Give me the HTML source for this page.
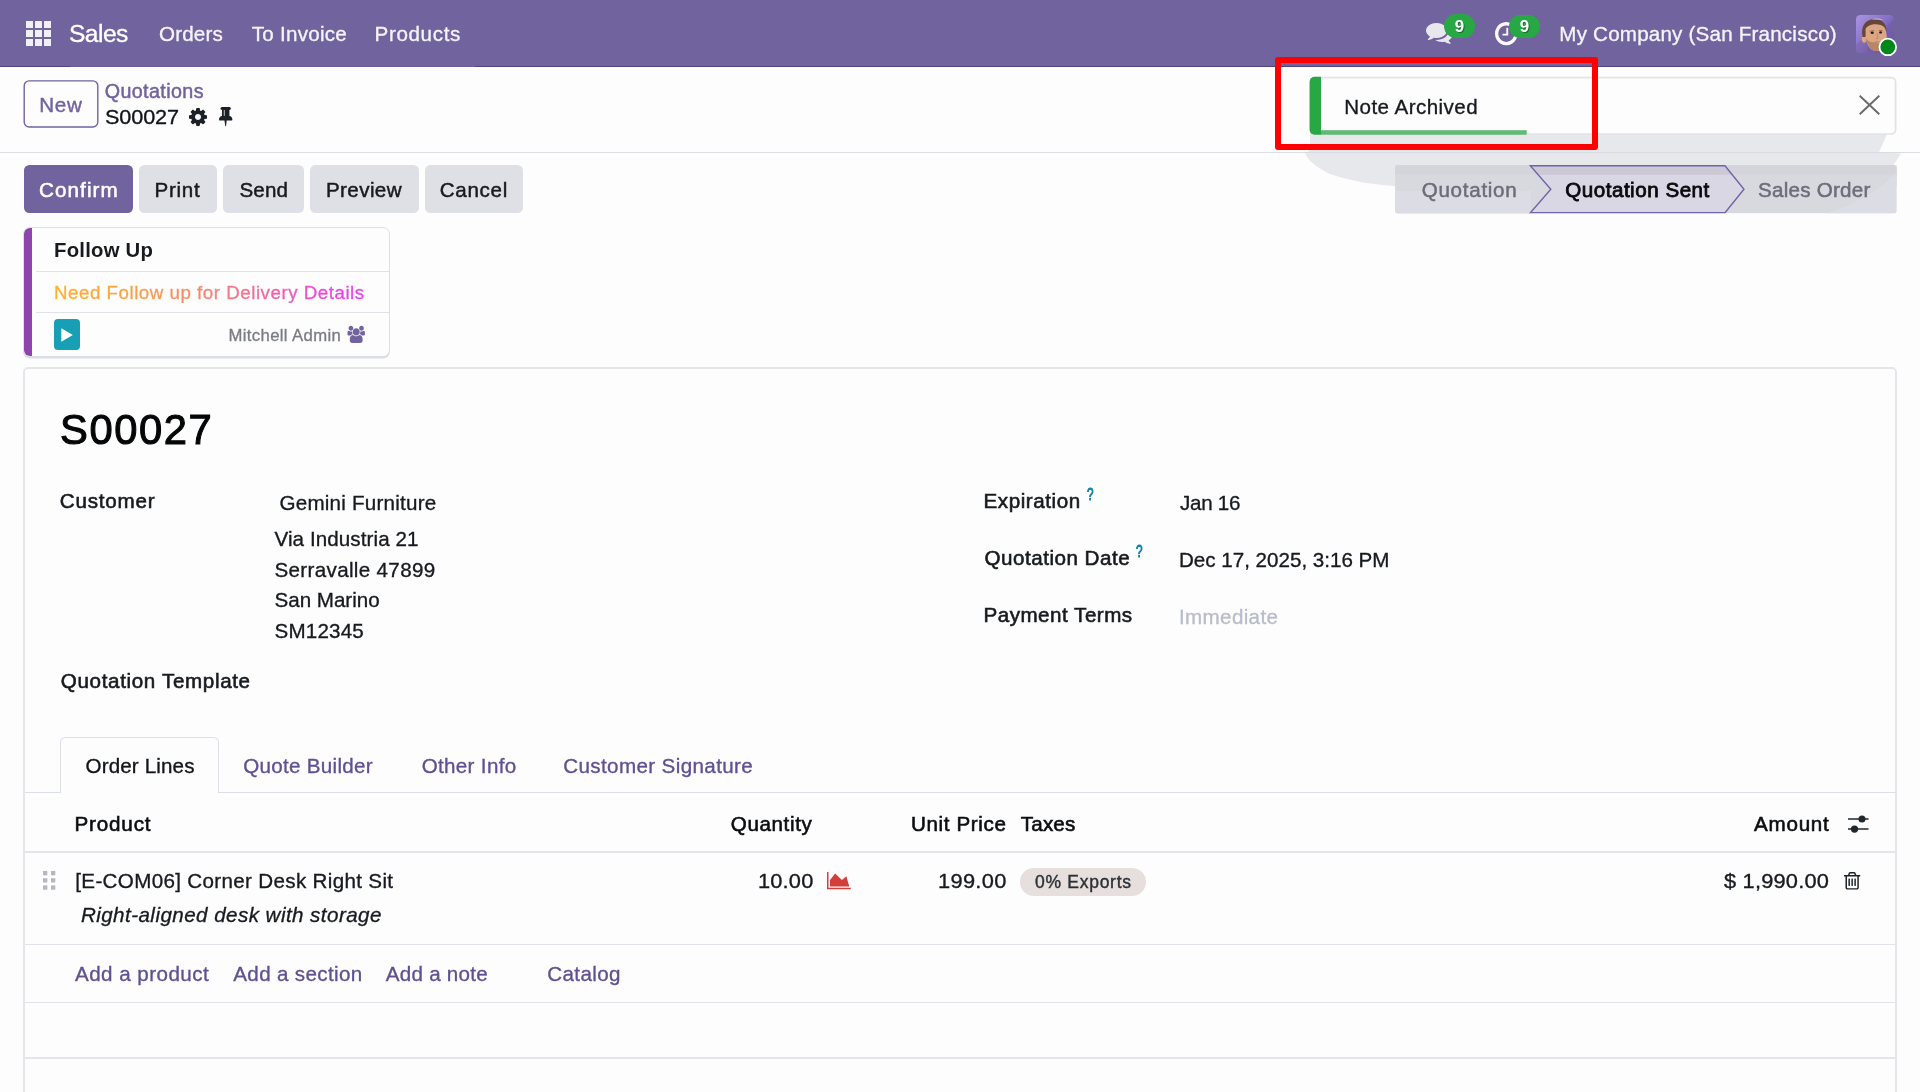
<!DOCTYPE html>
<html lang="en">
<head>
<meta charset="utf-8">
<title>S00027 - Quotations</title>
<style>
*{box-sizing:border-box;margin:0;padding:0}
html,body{width:1920px;height:1092px;overflow:hidden;background:#fdfdfd}
body{position:relative;font-family:"Liberation Sans",sans-serif}
.a{position:absolute}
.t{position:absolute;white-space:pre;line-height:1;font-family:"Liberation Sans",sans-serif}
.grad{background:linear-gradient(90deg,#ffb12c 0%,#fca047 25%,#f7886a 45%,#f57a86 56%,#f0689f 68%,#ec54c8 80%,#e945e6 90%,#e840ee 100%);-webkit-background-clip:text;background-clip:text;color:transparent !important;-webkit-text-fill-color:transparent;-webkit-text-stroke:0.35px transparent}
svg{position:absolute;overflow:visible}
.nav{left:0;top:0;width:1920px;height:67px;background:#71639e}
.cp{left:0;top:67px;width:1920px;height:86px;background:#fdfdfd;border-bottom:1.4px solid #dcdfe4}
.btn{top:165.3px;height:47.8px;border-radius:5.5px;background:#dee0e5}
.hl{height:1.4px;background:#dfe2e8}
</style>
</head>
<body>
<div id="root" style="position:absolute;left:0;top:0;width:1920px;height:1092px;will-change:transform">
<!-- ===== navbar ===== -->
<div class="a nav"></div>
<div class="a" style="left:0;top:66px;width:1920px;height:1px;background:#514280"></div>
<div class="a" style="left:70px;top:66px;width:405px;height:1px;background:#6a5b9a"></div>
<!-- apps grid -->
<svg style="left:26px;top:21px" width="25" height="25" viewBox="0 0 25 25">
 <g fill="#f1f0f6">
  <rect x="0" y="0" width="7" height="7"/><rect x="9" y="0" width="7" height="7"/><rect x="18" y="0" width="7" height="7"/>
  <rect x="0" y="9" width="7" height="7"/><rect x="9" y="9" width="7" height="7"/><rect x="18" y="9" width="7" height="7"/>
  <rect x="0" y="18" width="7" height="7"/><rect x="9" y="18" width="7" height="7"/><rect x="18" y="18" width="7" height="7"/>
 </g>
</svg>
<!-- comments icon -->
<svg style="left:1425.8px;top:21.4px" width="26.6" height="22.8" viewBox="0 128 1792 1536" preserveAspectRatio="none">
 <path fill="#e8e7ee" d="M1408 768q0 139-94 257t-256.500 186.500-353.500 68.500q-86 0-176-16-124 88-278 128-36 9-86 16h-3q-11 0-20.500-8t-11.500-21q-1-3-1-6.500t.5-6.500 2-6l2.500-5 3.500-5.500 4-5 4.500-5 4-4.500q5-6 23-25t26-29.500 22.500-29 25-38.500 20.500-44q-124-72-195-177t-71-224q0-139 94-257t256.500-186.500 353.500-68.500 353.500 68.500 256.500 186.500 94 257zm384 256q0 120-71 224.500t-195 176.500q10 24 20.500 44t25 38.500 22.500 29 26 29.500 23 25q1 1 4 4.500t4.500 5 4 5 3.500 5.500l2.500 5 2 6 .5 6.500-1 6.500q-3 14-13 22t-22 7q-50-7-86-16-154-40-278-128-90 16-176 16-271 0-472-132 58 4 88 4 161 0 309-45t264-129q125-92 192-212t67-254q0-77-23-152 129 71 204 178t75 230z"/>
</svg>
<div class="a" style="left:1443.8px;top:13.8px;width:31.4px;height:24.1px;border-radius:12px;background:#28a745"></div>
<!-- clock icon -->
<svg style="left:1494.9px;top:21.5px" width="22.6" height="23.3" viewBox="128 128 1536 1536" preserveAspectRatio="none">
 <path fill="#fbfbfd" d="M1024 544v448q0 14-9 23t-23 9h-320q-14 0-23-9t-9-23v-64q0-14 9-23t23-9h224v-352q0-14 9-23t23-9h64q14 0 23 9t9 23zm416 352q0-148-73-273t-198-198-273-73-273 73-198 198-73 273 73 273 198 198 273 73 273-73 198-198 73-273zm224 0q0 209-103 385.500t-279.500 279.500-385.500 103-385.500-103-279.500-279.500-103-385.500 103-385.500 279.500-279.500 385.500-103 385.500 103 279.500 279.500 103 385.500z"/>
</svg>
<div class="a" style="left:1508.7px;top:14.5px;width:31.4px;height:23.8px;border-radius:12px;background:#28a745"></div>
<!-- avatar -->
<svg style="left:1856px;top:14.5px" width="38" height="38.5" viewBox="0 0 38 38.5">
 <defs>
  <linearGradient id="avg" x1="0" y1="0" x2="1" y2="1">
   <stop offset="0" stop-color="#ab96e4"/><stop offset="0.45" stop-color="#8872c6"/><stop offset="0.55" stop-color="#7560ae"/><stop offset="1" stop-color="#6a57a0"/>
  </linearGradient>
  <clipPath id="avc"><rect x="0" y="0" width="38" height="38.5" rx="4.5"/></clipPath>
 </defs>
 <g clip-path="url(#avc)">
  <rect width="38" height="38.5" fill="url(#avg)"/>
  <path d="M0 32 L26 0 L38 0 L38 4 L6 38.5 L0 38.5Z" fill="#8a74c8" opacity=".35"/>
  <path d="M0 38.5 L0 30 L11 19 L11 38.5Z" fill="#7a68aa" opacity=".55"/>
  <!-- ear -->
  <ellipse cx="8.2" cy="24" rx="2.4" ry="3.8" fill="#dba583"/>
  <!-- hair -->
  <path d="M6.5 22 C4.5 10 10 4.5 18 4.2 C26 4 30.5 8 30.5 17 L28 12 C22 8.5 14 9 10.5 13 L9.5 22Z" fill="#65463a"/>
  <path d="M16 4.6 C19 3 25 3.2 28 5.6 C25 4.6 20 4.4 16 4.6Z" fill="#c3bbd6"/>
  <!-- face -->
  <path d="M9.5 14 C12 8.5 24 7.5 28.5 12.5 C31 17 31.5 24 29.5 30 C27 35 22 36.5 18.5 35.8 C14 35 10.5 29 9.8 22Z" fill="#dca684"/>
  <!-- beard -->
  <path d="M9.9 23 C11 30 14.5 35.2 18.5 35.8 C22 36.5 27 35 29.6 29.5 C27 31 24 28.5 21 27.5 C17 27 13 28 9.9 23Z" fill="#b98665"/>
  <!-- eyes -->
  <ellipse cx="16.2" cy="17.8" rx="1.6" ry="1.2" fill="#241a16"/>
  <ellipse cx="24.6" cy="17.4" rx="1.4" ry="1.2" fill="#241a16"/>
  <path d="M13.6 16.2 L18.3 15.6 M22.8 15.4 L26.8 15.7" stroke="#8a6450" stroke-width="0.8" fill="none"/>
  <!-- nose / mouth -->
  <path d="M21.2 18 L21.8 23.5 L19.5 24" stroke="#c48e6e" stroke-width="1.1" fill="none"/>
  <path d="M19 27 L23.5 26.7" stroke="#9b8a88" stroke-width="1" fill="none"/>
 </g>
</svg>
<svg style="left:1870px;top:30px" width="30" height="30" viewBox="1870 30 30 30"><circle cx="1887.8" cy="46.9" r="8.3" fill="#00891a" stroke="#ffffff" stroke-width="1.8"/></svg>

<!-- ===== control panel ===== -->
<div class="a cp"></div>
<svg style="left:0;top:0" width="120" height="140" viewBox="0 0 120 140"><rect x="24.2" y="80.9" width="73.6" height="46.1" rx="5" fill="#fdfdfd" stroke="#71639e" stroke-width="1.4"/></svg>
<!-- gear -->
<svg style="left:189.1px;top:107.8px" width="18" height="17.9" viewBox="128 128 1536 1536" preserveAspectRatio="none">
 <path fill="#1c2127" d="M1152 896q0-106-75-181t-181-75-181 75-75 181 75 181 181 75 181-75 75-181zm512-109v222q0 12-8 23t-20 13l-185 28q-19 54-39 91 35 50 107 138 10 12 10 25t-9 23q-27 37-99 108t-94 71q-12 0-26-9l-138-108q-44 23-91 38-16 136-29 186-7 28-36 28h-222q-14 0-24.500-8.500t-11.500-21.500l-28-184q-49-16-90-37l-141 107q-10 9-25 9-14 0-25-11-126-114-165-168-7-10-7-23 0-12 8-23 15-21 51-66.500t54-70.500q-27-50-41-99l-183-27q-13-2-21-12.500t-8-23.500v-222q0-12 8-23t19-13l186-28q14-46 39-92-40-57-107-138-10-12-10-24 0-10 9-23 26-36 98.500-107.500t94.500-71.500q13 0 26 10l138 107q44-23 91-38 16-136 29-186 7-28 36-28h222q14 0 24.500 8.500t11.500 21.500l28 184q49 16 90 37l142-107q9-9 24-9 13 0 25 10 129 119 165 170 7 8 7 22 0 12-8 23-15 21-51 66.500t-54 70.500q26 50 41 98l183 28q13 2 21 12.500t8 23.500z"/>
</svg>
<!-- pin -->
<svg style="left:219.1px;top:107.3px" width="13.4" height="18.6" viewBox="320 128 1152 1600" preserveAspectRatio="none">
 <path fill="#1c2127" d="M800 864v-448q0-14-9-23t-23-9-23 9-9 23v448q0 14 9 23t23 9 23-9 9-23zm672 352q0 26-19 45t-45 19h-429l-51 483q-2 12-10.500 20.500t-20.500 8.500h-1q-27 0-32-27l-76-485h-404q-26 0-45-19t-19-45q0-123 78.500-221.500t177.500-98.500v-512q-52 0-90-38t-38-90 38-90 90-38h640q52 0 90 38t38 90-38 90-90 38v512q99 0 177.500 98.500t78.500 221.500z"/>
</svg>

<!-- ===== notification shadow (quantised) ===== -->
<svg style="left:0;top:0" width="1920" height="240" viewBox="0 0 1920 240">
 <path d="M1310 133 L1887.5 133 L1879 152.2 L1901 153.4 L1893.5 165 L1897 165 L1897 186 L1395 186 C1376 185 1353 182 1330 174 C1318 168 1308 161 1305.5 154 L1310 150 Z" fill="#e7e8eb"/>
</svg>
<div class="a hl" style="left:1304px;top:151.8px;width:598px;background:#d9dbe1"></div>

<!-- ===== action buttons ===== -->
<div class="a btn" style="left:23.5px;width:109.7px;background:#71639e"></div>
<div class="a btn" style="left:139.3px;width:77.5px"></div>
<div class="a btn" style="left:223px;width:80.7px"></div>
<div class="a btn" style="left:310px;width:108.8px"></div>
<div class="a btn" style="left:425px;width:98px"></div>

<!-- ===== statusbar ===== -->
<svg style="left:1395px;top:165px" width="502" height="48.4" viewBox="0 0 502 48.4">
 <defs><clipPath id="sbc"><rect x="0" y="0" width="501.5" height="48.4" rx="3"/></clipPath></defs>
 <g clip-path="url(#sbc)">
  <rect x="0" y="0" width="502" height="48.4" fill="#d8d8df"/>
  <rect x="0" y="26" width="136" height="23" fill="#dcdce4"/>
  <path d="M431 48.4 C460 40 485 25 502 7 L502 48.4Z" fill="#dcdce4"/>
  <rect x="0" y="0" width="502" height="9.2" fill="#d4d4da"/>
  <path d="M135.3 0.7 L330 0.7 L349 24.2 L330 47.7 L135.3 47.7 L155.8 24.2Z" fill="#d9d7e4"/>
  <path d="M135.3 0.7 L330 0.7 L337.3 9.7 L143.2 9.7Z" fill="#cbc9d6"/>
  <path d="M135.3 0.7 L330 0.7 L349 24.2 L330 47.7 L135.3 47.7 L155.8 24.2Z" fill="none" stroke="#7263a8" stroke-width="1.4" stroke-linejoin="miter"/>
 </g>
</svg>

<!-- ===== notification ===== -->
<svg style="left:1300px;top:70px" width="610" height="75" viewBox="1300 70 610 75">
 <defs><clipPath id="ntc"><rect x="1309.6" y="76.8" width="586.8" height="58" rx="5"/></clipPath></defs>
 <rect x="1310.4" y="77.6" width="585.2" height="56.4" rx="4.4" fill="#fdfdfd" stroke="#e1e3e7" stroke-width="1.7"/>
 <g clip-path="url(#ntc)">
  <rect x="1309" y="76" width="12" height="60" fill="#28a745"/>
  <rect x="1321" y="130.2" width="205.7" height="5" fill="#62b975"/>
 </g>
</svg>
<svg style="left:1859px;top:95px" width="21" height="20" viewBox="0 0 21 20">
 <path d="M0.7 0.7 L20.3 19.3 M20.3 0.7 L0.7 19.3" stroke="#6a6a6a" stroke-width="1.9" fill="none"/>
</svg>
<!-- red highlight box -->
<div class="a" style="left:1274.6px;top:57px;width:323.8px;height:92.7px;border:6px solid #ff0000;border-radius:3px"></div>

<!-- ===== follow-up card ===== -->
<div class="a" style="left:23px;top:227px;width:367.3px;height:130px;border:1px solid #dcdfe5;border-radius:7px;background:#fdfdfd;box-shadow:0 1.6px 0.6px rgba(190,195,205,.55);overflow:hidden">
 <div class="a" style="left:0px;top:-1px;width:7.6px;height:131px;background:#8e44ad"></div>
 <div class="a hl" style="left:12px;top:42.7px;width:354px;height:1.2px"></div>
 <div class="a hl" style="left:12px;top:84.3px;width:354px;height:1.2px"></div>
</div>
<div class="a" style="left:54px;top:319.2px;width:26px;height:30.5px;border-radius:4px;background:#17a0b5"></div>
<svg style="left:61px;top:327.5px" width="12" height="14" viewBox="0 0 12 14"><path d="M0.3 0.3 L11.8 7 L0.3 13.7Z" fill="#fff"/></svg>
<!-- users icon -->
<svg style="left:348px;top:326.9px" width="17.6" height="15.9" viewBox="0 128 1920 1664" preserveAspectRatio="none">
 <path fill="#71639e" d="M529 896q-162 5-265 128h-134q-82 0-138-40.500t-56-118.500q0-353 124-353 6 0 43.500 21t97.500 42.500 119 21.500q67 0 133-23-5 37-5 66 0 139 81 256zm1071 637q0 120-73 189.500t-194 69.500h-874q-121 0-194-69.500t-73-189.500q0-53 3.500-103.500t14-109 26.500-108.500 43-97.500 62-81 85.500-53.500 111.500-20q10 0 43 21.500t73 48 107 48 135 21.500 135-21.500 107-48 73-48 43-21.500q61 0 111.500 20t85.500 53.500 62 81 43 97.500 26.500 108.500 14 109 3.500 103.500zm-1024-1277q0 106-75 181t-181 75-181-75-75-181 75-181 181-75 181 75 75 181zm704 384q0 159-112.500 271.500t-271.500 112.500-271.500-112.500-112.500-271.500 112.500-271.500 271.500-112.500 271.500 112.500 112.500 271.500zm576 225q0 78-56 118.500t-138 40.500h-134q-103-123-265-128 81-117 81-256 0-29-5-66 66 23 133 23 59 0 119-21.500t97.500-42.500 43.500-21q124 0 124 353zm-128-609q0 106-75 181t-181 75-181-75-75-181 75-181 181-75 181 75 75 181z"/>
</svg>

<!-- ===== form sheet ===== -->
<div class="a" style="left:23px;top:367px;width:1874px;height:740px;border:2px solid #e4e6ea;border-radius:5px;background:#fdfdfd"></div>
<!-- tabs -->
<div class="a hl" style="left:25px;top:791.6px;width:1870.5px;background:#dcdfe5"></div>
<div class="a" style="left:60px;top:737px;width:159px;height:56.2px;border:1.4px solid #dcdfe5;border-bottom:none;border-radius:5.5px 5.5px 0 0;background:#fdfdfd"></div>
<!-- table lines -->
<div class="a" style="left:25px;top:850.8px;width:1870.5px;height:2.2px;background:#e3e5ea"></div>
<div class="a hl" style="left:25px;top:943.6px;width:1870.5px"></div>
<div class="a hl" style="left:25px;top:1001.7px;width:1870.5px"></div>
<div class="a" style="left:25px;top:1056.6px;width:1870.5px;height:2.2px;background:#e3e5ea"></div>
<!-- drag handle -->
<svg style="left:43px;top:871.3px" width="12.3" height="18.7" viewBox="0 0 12.3 18.7">
 <g fill="#b6b7bf"><rect x="0" y="0" width="4.3" height="4.3"/><rect x="8" y="0" width="4.3" height="4.3"/><rect x="0" y="7.2" width="4.3" height="4.3"/><rect x="8" y="7.2" width="4.3" height="4.3"/><rect x="0" y="14.4" width="4.3" height="4.3"/><rect x="8" y="14.4" width="4.3" height="4.3"/></g>
</svg>
<!-- area chart icon -->
<svg style="left:827px;top:872px" width="23.8" height="17.3" viewBox="0 128 2048 1536" preserveAspectRatio="none">
 <path fill="#d23f3a" d="M2048 1536v128h-2048v-1536h128v1408h1920zm-384-1024l256 896h-1664v-576l448-576 576 576z"/>
</svg>
<!-- tax badge -->
<div class="a" style="left:1020px;top:868px;width:125.8px;height:27.6px;border-radius:14px;background:#e7dfde"></div>
<!-- sliders icon -->
<svg style="left:1847.5px;top:815px" width="20.5" height="18" viewBox="0 0 20.5 18">
 <path d="M0 4 H20.5 M0 14.1 H20.5" stroke="#22262d" stroke-width="1.5" fill="none"/>
 <circle cx="14" cy="4" r="3.5" fill="#22262d"/><circle cx="6.5" cy="14.1" r="3.6" fill="#22262d"/>
</svg>
<!-- trash icon -->
<svg style="left:1843.8px;top:871.9px" width="16.3" height="17.6" viewBox="192 128 1408 1536" preserveAspectRatio="none">
 <path fill="#1c2127" d="M704 736v576q0 14-9 23t-23 9h-64q-14 0-23-9t-9-23v-576q0-14 9-23t23-9h64q14 0 23 9t9 23zm256 0v576q0 14-9 23t-23 9h-64q-14 0-23-9t-9-23v-576q0-14 9-23t23-9h64q14 0 23 9t9 23zm256 0v576q0 14-9 23t-23 9h-64q-14 0-23-9t-9-23v-576q0-14 9-23t23-9h64q14 0 23 9t9 23zm128 724v-948h-896v948q0 22 7 40.500t14.500 27 10.500 8.500h832q3 0 10.500-8.500t14.500-27 7-40.500zm-672-1076h448l-48-117q-7-9-17-11h-317q-10 2-17 11zm928 32v64q0 14-9 23t-23 9h-96v948q0 83-47 143.500t-113 60.500h-832q-66 0-113-58.500t-47-141.500v-952h-96q-14 0-23-9t-9-23v-64q0-14 9-23t23-9h309l70-167q15-37 54-63t79-26h320q40 0 79 26t54 63l70 167h309q14 0 23 9t9 23z"/>
</svg>

<!-- ===== text ===== -->
<span class="t" style="left:69.00px;top:22.00px;font-size:24.6px;letter-spacing:-0.556px;color:#ffffff;-webkit-text-stroke:0.33px currentColor;">Sales</span>
<span class="t" style="left:159.00px;top:24.00px;font-size:20.6px;letter-spacing:0.172px;color:#f4f3f8;-webkit-text-stroke:0.33px currentColor;">Orders</span>
<span class="t" style="left:251.70px;top:24.00px;font-size:20.6px;letter-spacing:0.259px;color:#f4f3f8;-webkit-text-stroke:0.33px currentColor;">To Invoice</span>
<span class="t" style="left:374.50px;top:24.00px;font-size:20.6px;letter-spacing:0.647px;color:#f4f3f8;-webkit-text-stroke:0.33px currentColor;">Products</span>
<span class="t" style="left:1559.30px;top:24.00px;font-size:20.6px;letter-spacing:0.199px;color:#f4f3f8;-webkit-text-stroke:0.33px currentColor;">My Company (San Francisco)</span>
<span class="t" style="left:1454.75px;top:18.00px;font-size:17px;letter-spacing:0.000px;color:#ffffff;font-weight:700;text-shadow:1px 1px 0 rgba(0,60,20,.55);">9</span>
<span class="t" style="left:1519.70px;top:18.00px;font-size:17px;letter-spacing:0.000px;color:#ffffff;font-weight:700;text-shadow:1px 1px 0 rgba(0,60,20,.55);">9</span>
<span class="t" style="left:39.30px;top:95.00px;font-size:20.6px;letter-spacing:0.687px;color:#71639e;-webkit-text-stroke:0.42px currentColor;">New</span>
<span class="t" style="left:104.70px;top:82.00px;font-size:19.7px;letter-spacing:0.403px;color:#71639e;-webkit-text-stroke:0.48px currentColor;">Quotations</span>
<span class="t" style="left:104.70px;top:107.00px;font-size:20.6px;letter-spacing:-0.091px;color:#111418;-webkit-text-stroke:0.33px currentColor;transform:scaleX(1.05);transform-origin:0 0;">S00027</span>
<span class="t" style="left:39.00px;top:180.00px;font-size:20.6px;letter-spacing:1.094px;color:#ffffff;-webkit-text-stroke:0.55px currentColor;">Confirm</span>
<span class="t" style="left:154.50px;top:180.00px;font-size:20.6px;letter-spacing:0.719px;color:#171a1f;-webkit-text-stroke:0.46px currentColor;">Print</span>
<span class="t" style="left:239.50px;top:180.00px;font-size:20.6px;letter-spacing:0.119px;color:#171a1f;-webkit-text-stroke:0.46px currentColor;">Send</span>
<span class="t" style="left:326.00px;top:180.00px;font-size:20.6px;letter-spacing:0.388px;color:#171a1f;-webkit-text-stroke:0.46px currentColor;">Preview</span>
<span class="t" style="left:439.80px;top:180.00px;font-size:20.6px;letter-spacing:0.674px;color:#171a1f;-webkit-text-stroke:0.46px currentColor;">Cancel</span>
<span class="t" style="left:1421.70px;top:180.00px;font-size:20.6px;letter-spacing:0.719px;color:#6b6e79;-webkit-text-stroke:0.5px currentColor;">Quotation</span>
<span class="t" style="left:1565.20px;top:180.00px;font-size:20.6px;letter-spacing:0.518px;color:#08090b;-webkit-text-stroke:0.8px currentColor;">Quotation Sent</span>
<span class="t" style="left:1758.10px;top:180.00px;font-size:20.6px;letter-spacing:0.228px;color:#6b6e79;-webkit-text-stroke:0.5px currentColor;">Sales Order</span>
<span class="t" style="left:1344.30px;top:97.00px;font-size:20.6px;letter-spacing:0.426px;color:#171a1f;-webkit-text-stroke:0.33px currentColor;">Note Archived</span>
<span class="t" style="left:54.00px;top:240.00px;font-size:20.3px;letter-spacing:0.251px;color:#171a1f;font-weight:700;">Follow Up</span>
<span class="t grad" style="left:54.00px;top:284.00px;font-size:18.7px;letter-spacing:0.538px;color:#f0609a;">Need Follow up for Delivery Details</span>
<span class="t" style="left:228.40px;top:328.00px;font-size:16.7px;letter-spacing:0.375px;color:#7a7d83;-webkit-text-stroke:0.33px currentColor;">Mitchell Admin</span>
<span class="t" style="left:59.52px;top:408.00px;font-size:42.8px;letter-spacing:1.614px;color:#050607;-webkit-text-stroke:1.1px currentColor;transform:scaleX(0.975);transform-origin:0 0;">S00027</span>
<span class="t" style="left:59.80px;top:491.00px;font-size:20.6px;letter-spacing:0.785px;color:#171a1f;-webkit-text-stroke:0.6px currentColor;">Customer</span>
<span class="t" style="left:279.50px;top:493.00px;font-size:20.6px;letter-spacing:0.226px;color:#171a1f;-webkit-text-stroke:0.33px currentColor;">Gemini Furniture</span>
<span class="t" style="left:274.50px;top:529.00px;font-size:20.6px;letter-spacing:0.082px;color:#171a1f;-webkit-text-stroke:0.33px currentColor;">Via Industria 21</span>
<span class="t" style="left:274.50px;top:560.00px;font-size:20.6px;letter-spacing:0.330px;color:#171a1f;-webkit-text-stroke:0.33px currentColor;">Serravalle 47899</span>
<span class="t" style="left:274.50px;top:590.00px;font-size:20.6px;letter-spacing:-0.018px;color:#171a1f;-webkit-text-stroke:0.33px currentColor;">San Marino</span>
<span class="t" style="left:274.50px;top:621.00px;font-size:20.6px;letter-spacing:0.183px;color:#171a1f;-webkit-text-stroke:0.33px currentColor;">SM12345</span>
<span class="t" style="left:60.80px;top:671.00px;font-size:20.6px;letter-spacing:0.651px;color:#171a1f;-webkit-text-stroke:0.6px currentColor;">Quotation Template</span>
<span class="t" style="left:983.50px;top:491.00px;font-size:20.6px;letter-spacing:0.564px;color:#171a1f;-webkit-text-stroke:0.6px currentColor;">Expiration</span>
<span class="t" style="left:1087.00px;top:487.00px;font-size:15.6px;letter-spacing:0.000px;color:#0f7fa6;-webkit-text-stroke:0.85px currentColor;transform:scaleX(0.756);transform-origin:0 0;">?</span>
<span class="t" style="left:1180.00px;top:493.00px;font-size:20.6px;letter-spacing:-0.276px;color:#171a1f;-webkit-text-stroke:0.33px currentColor;">Jan 16</span>
<span class="t" style="left:984.50px;top:548.00px;font-size:20.6px;letter-spacing:0.510px;color:#171a1f;-webkit-text-stroke:0.6px currentColor;">Quotation Date</span>
<span class="t" style="left:1136.30px;top:544.00px;font-size:15.6px;letter-spacing:0.000px;color:#0f7fa6;-webkit-text-stroke:0.85px currentColor;transform:scaleX(0.756);transform-origin:0 0;">?</span>
<span class="t" style="left:1179.00px;top:550.00px;font-size:20.6px;letter-spacing:-0.009px;color:#171a1f;-webkit-text-stroke:0.33px currentColor;">Dec 17, 2025, 3:16 PM</span>
<span class="t" style="left:983.50px;top:605.00px;font-size:20.6px;letter-spacing:0.496px;color:#171a1f;-webkit-text-stroke:0.6px currentColor;">Payment Terms</span>
<span class="t" style="left:1179.00px;top:607.00px;font-size:20.6px;letter-spacing:0.352px;color:#b9bccb;-webkit-text-stroke:0.33px currentColor;">Immediate</span>
<span class="t" style="left:85.50px;top:756.00px;font-size:20.6px;letter-spacing:0.140px;color:#111418;-webkit-text-stroke:0.33px currentColor;">Order Lines</span>
<span class="t" style="left:243.30px;top:756.00px;font-size:20.6px;letter-spacing:0.278px;color:#5f5191;-webkit-text-stroke:0.33px currentColor;">Quote Builder</span>
<span class="t" style="left:421.70px;top:756.00px;font-size:20.6px;letter-spacing:0.320px;color:#5f5191;-webkit-text-stroke:0.33px currentColor;">Other Info</span>
<span class="t" style="left:563.30px;top:756.00px;font-size:20.6px;letter-spacing:0.371px;color:#5f5191;-webkit-text-stroke:0.33px currentColor;">Customer Signature</span>
<span class="t" style="left:74.50px;top:814.00px;font-size:20.6px;letter-spacing:0.842px;color:#0b0d10;-webkit-text-stroke:0.6px currentColor;">Product</span>
<span class="t" style="left:730.75px;top:814.00px;font-size:20.6px;letter-spacing:0.622px;color:#0b0d10;-webkit-text-stroke:0.6px currentColor;">Quantity</span>
<span class="t" style="left:911.00px;top:814.00px;font-size:20.6px;letter-spacing:0.632px;color:#0b0d10;-webkit-text-stroke:0.6px currentColor;">Unit Price</span>
<span class="t" style="left:1020.75px;top:814.00px;font-size:20.6px;letter-spacing:0.188px;color:#0b0d10;-webkit-text-stroke:0.6px currentColor;">Taxes</span>
<span class="t" style="left:1754.10px;top:814.00px;font-size:20.6px;letter-spacing:0.730px;color:#0b0d10;-webkit-text-stroke:0.6px currentColor;">Amount</span>
<span class="t" style="left:75.30px;top:871.00px;font-size:20.6px;letter-spacing:0.329px;color:#171a1f;-webkit-text-stroke:0.33px currentColor;">[E-COM06] Corner Desk Right Sit</span>
<span class="t" style="left:80.90px;top:905.00px;font-size:20.6px;letter-spacing:0.441px;color:#171a1f;-webkit-text-stroke:0.33px currentColor;font-style:italic;">Right-aligned desk with storage</span>
<span class="t" style="left:757.69px;top:871.00px;font-size:20.6px;letter-spacing:0.157px;color:#171a1f;-webkit-text-stroke:0.33px currentColor;transform:scaleX(1.06);transform-origin:0 0;">10.00</span>
<span class="t" style="left:937.69px;top:871.00px;font-size:20.6px;letter-spacing:0.287px;color:#171a1f;-webkit-text-stroke:0.33px currentColor;transform:scaleX(1.06);transform-origin:0 0;">199.00</span>
<span class="t" style="left:1035.00px;top:874.00px;font-size:17.5px;letter-spacing:0.724px;color:#2b3035;-webkit-text-stroke:0.4px currentColor;">0% Exports</span>
<span class="t" style="left:1724.00px;top:871.00px;font-size:20.6px;letter-spacing:0.178px;color:#171a1f;-webkit-text-stroke:0.33px currentColor;transform:scaleX(1.06);transform-origin:0 0;">$ 1,990.00</span>
<span class="t" style="left:75.00px;top:964.00px;font-size:20.6px;letter-spacing:0.458px;color:#5f5191;-webkit-text-stroke:0.33px currentColor;">Add a product</span>
<span class="t" style="left:233.30px;top:964.00px;font-size:20.6px;letter-spacing:0.339px;color:#5f5191;-webkit-text-stroke:0.33px currentColor;">Add a section</span>
<span class="t" style="left:385.70px;top:964.00px;font-size:20.6px;letter-spacing:0.270px;color:#5f5191;-webkit-text-stroke:0.33px currentColor;">Add a note</span>
<span class="t" style="left:547.30px;top:964.00px;font-size:20.6px;letter-spacing:0.362px;color:#5f5191;-webkit-text-stroke:0.33px currentColor;">Catalog</span>
</div>
</body>
</html>
